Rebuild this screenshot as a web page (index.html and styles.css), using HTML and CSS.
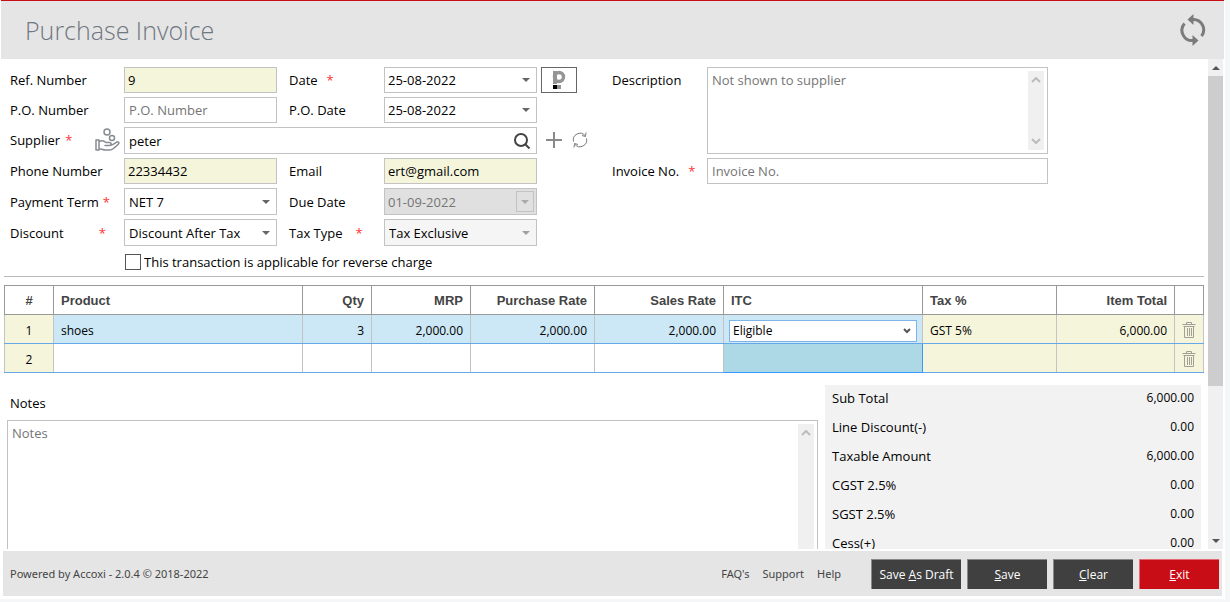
FILE: index.html
```html
<!DOCTYPE html>
<html lang="en">
<head>
    <meta charset="UTF-8">
    <meta name="viewport" content="width=device-width, initial-scale=1.0">
    <title>Purchase Invoice</title>
    <link rel="stylesheet" href="styles.css">
</head>
<body>
    <div class="app">
        <header class="page-header">
            <h1>Purchase Invoice</h1>
            <button type="button" class="icon-btn" aria-label="Refresh">
                <svg width="26" height="34" viewBox="0 0 26 34" fill="none" stroke="#7b7b7b" stroke-width="3">
                    <path d="M4.5 10.5A10.3 10.3 0 0 0 13.5 27.5"/>
                    <path d="M12.5 6.5A10.3 10.3 0 0 1 21.5 23"/>
                    <path d="M13.5 1V12L7.5 6.5Z" fill="#7b7b7b" stroke="none"/>
                    <path d="M12.5 22V33L18.5 27.5Z" fill="#7b7b7b" stroke="none"/>
                </svg>
            </button>
        </header>

        <div class="body">
            <main class="content">
                <form class="invoice-form">
                    <div class="fields">
                        <label class="c1" for="ref">Ref. Number</label>
                        <input class="c2 readonly" id="ref" type="text" value="9" readonly>
                        <label class="c3" for="date">Date <span class="req">*</span></label>
                        <input class="c4 drop" id="date" type="text" value="25-08-2022">
                        <button type="button" class="period-btn" aria-label="Period">
                            <svg width="14" height="20" viewBox="0 0 14 20">
                                <rect x="1" y="1" width="4" height="13" fill="#959595"/>
                                <circle cx="7" cy="7" r="4.5" fill="none" stroke="#959595" stroke-width="3.4"/>
                                <rect x="1" y="15" width="4" height="4" fill="#000"/>
                                <rect x="5" y="15" width="4" height="4" fill="#959595"/>
                            </svg>
                        </button>

                        <label class="c1" for="po">P.O. Number</label>
                        <input class="c2" id="po" type="text" placeholder="P.O. Number">
                        <label class="c3" for="podate">P.O. Date</label>
                        <input class="c4 drop" id="podate" type="text" value="25-08-2022">

                        <div class="c1 supplier-label">
                            <label for="supplier">Supplier <span class="req">*</span></label>
                            <svg width="25" height="24" viewBox="0 0 25 24" fill="none" stroke="#868b90" stroke-width="1.5" stroke-linejoin="round" stroke-linecap="round">
                                <circle cx="12" cy="4" r="3"/>
                                <circle cx="17" cy="10" r="2.5"/>
                                <path d="M1 12H4V22H1ZM4 13.5C7 12 9 12.5 11 14.5H14.5C17 14.5 16.5 17.5 14.5 17.5H10M16.5 17C19 16.5 20.5 14.5 22 14C24 13.5 24.5 15 23 16.5C20 19.5 17 22 15 22H10C8 22 7 20.5 4 21"/>
                            </svg>
                        </div>
                        <div class="search">
                            <input id="supplier" type="text" value="peter">
                            <button type="button" class="icon-btn" aria-label="Search supplier">
                                <svg width="18" height="18" viewBox="0 0 18 18" fill="none" stroke="#444" stroke-width="2">
                                    <circle cx="8" cy="8" r="6"/>
                                    <path d="M12 12L16.500 16.500"/>
                                </svg>
                            </button>
                        </div>
                        <div class="supplier-tools">
                            <button type="button" class="icon-btn" aria-label="Add supplier">
                                <svg width="16" height="16" viewBox="0 0 16 16" stroke="#8a8a8a" stroke-width="2"><path d="M8 0V16M0 8H16"/></svg>
                            </button>
                            <button type="button" class="icon-btn" aria-label="Reload suppliers">
                                <svg width="16" height="16" viewBox="0 0 16 16" fill="none" stroke="#7a7a7a">
                                    <path d="M1.5 9.5A6.7 6.7 0 0 1 13 3.5M14.5 6.5A6.7 6.7 0 0 1 3 12.5M14 0.5L13.5 4.5L10 3.5M2 15.5L2.5 11.5L6 12.5"/>
                                </svg>
                            </button>
                        </div>

                        <label class="c1" for="phone">Phone Number</label>
                        <input class="c2 readonly" id="phone" type="text" value="22334432" readonly>
                        <label class="c3" for="email">Email</label>
                        <input class="c4 readonly" id="email" type="text" value="ert@gmail.com" readonly>

                        <label class="c1 spread" for="term">Payment Term <span class="req">*</span></label>
                        <select class="c2 drop" id="term"><option>NET 7</option></select>
                        <label class="c3" for="due">Due Date</label>
                        <div class="due">
                            <input id="due" type="text" value="01-09-2022" disabled>
                            <span class="due-arrow"></span>
                        </div>

                        <label class="c1 spread" for="discount">Discount <span class="req">*</span></label>
                        <select class="c2 drop" id="discount"><option>Discount After Tax</option></select>
                        <label class="c3 tax-label" for="taxtype">Tax Type <span class="req">*</span></label>
                        <select class="c4 drop" id="taxtype" disabled><option>Tax Exclusive</option></select>

                        <label class="c6 desc-label" for="desc">Description</label>
                        <div class="text-wrap desc">
                            <textarea id="desc" placeholder="Not shown to supplier"></textarea>
                            <span class="mini-bar">
                                <svg width="10" height="6" viewBox="0 0 10 6"><path d="M1 5L5 1L9 5"/></svg>
                                <svg width="10" height="6" viewBox="0 0 10 6"><path d="M1 1L5 5L9 1"/></svg>
                            </span>
                        </div>
                        <label class="c6 invno-label" for="invno">Invoice No. <span class="req">*</span></label>
                        <input class="invno" id="invno" type="text" placeholder="Invoice No.">
                    </div>
                    <label class="reverse"><input type="checkbox"> This transaction is applicable for reverse charge</label>
                </form>

                <table class="items">
                    <colgroup>
                        <col class="w-num"><col><col class="w-qty"><col class="w-mrp"><col class="w-prate">
                        <col class="w-srate"><col class="w-itc"><col class="w-tax"><col class="w-total"><col class="w-del">
                    </colgroup>
                    <thead>
                        <tr>
                            <th class="mid">#</th>
                            <th>Product</th>
                            <th class="num">Qty</th>
                            <th class="num">MRP</th>
                            <th class="num">Purchase Rate</th>
                            <th class="num">Sales Rate</th>
                            <th>ITC</th>
                            <th>Tax %</th>
                            <th class="num">Item Total</th>
                            <th></th>
                        </tr>
                    </thead>
                    <tbody>
                        <tr class="active">
                            <td class="mid locked">1</td>
                            <td>shoes</td>
                            <td class="num">3</td>
                            <td class="num">2,000.00</td>
                            <td class="num">2,000.00</td>
                            <td class="num">2,000.00</td>
                            <td class="itc"><select aria-label="ITC"><option>Eligible</option></select></td>
                            <td class="locked">GST 5%</td>
                            <td class="num locked">6,000.00</td>
                            <td class="del locked">
                                <button type="button" class="icon-btn" aria-label="Delete row 1">
                                    <svg width="14" height="17" viewBox="0 0 14 17" fill="none" stroke="#a0a098"><path d="M0.5 3.5H13.5M4.5 3V1.5H9.5V3M1.5 5.5H12.5M2.5 5.5V16.5H11.5V5.5M5.5 7V15M7.5 7V15M9.5 7V15"/></svg>
                                </button>
                            </td>
                        </tr>
                        <tr>
                            <td class="mid locked">2</td>
                            <td></td>
                            <td></td>
                            <td></td>
                            <td></td>
                            <td></td>
                            <td class="focus"></td>
                            <td class="locked"></td>
                            <td class="locked"></td>
                            <td class="del locked">
                                <button type="button" class="icon-btn" aria-label="Delete row 2">
                                    <svg width="14" height="17" viewBox="0 0 14 17" fill="none" stroke="#a0a098"><path d="M0.5 3.5H13.5M4.5 3V1.5H9.5V3M1.5 5.5H12.5M2.5 5.5V16.5H11.5V5.5M5.5 7V15M7.5 7V15M9.5 7V15"/></svg>
                                </button>
                            </td>
                        </tr>
                    </tbody>
                </table>

                <div class="bottom">
                    <div class="notes">
                        <label for="notes">Notes</label>
                        <div class="text-wrap notes-box">
                            <textarea id="notes" placeholder="Notes"></textarea>
                            <span class="mini-bar">
                                <svg width="10" height="6" viewBox="0 0 10 6"><path d="M1 5L5 1L9 5"/></svg>
                                <svg width="10" height="6" viewBox="0 0 10 6"><path d="M1 1L5 5L9 1"/></svg>
                            </span>
                        </div>
                    </div>
                    <dl class="summary">
                        <div><dt>Sub Total</dt><dd>6,000.00</dd></div>
                        <div><dt>Line Discount(-)</dt><dd>0.00</dd></div>
                        <div><dt>Taxable Amount</dt><dd>6,000.00</dd></div>
                        <div><dt>CGST 2.5%</dt><dd>0.00</dd></div>
                        <div><dt>SGST 2.5%</dt><dd>0.00</dd></div>
                        <div><dt>Cess(+)</dt><dd>0.00</dd></div>
                    </dl>
                </div>
            </main>

            <div class="scrollbar">
                <span class="arrow"><svg width="8" height="4" viewBox="0 0 8 4"><path d="M0 4L4 0L8 4Z"/></svg></span>
                <div class="track"><div class="thumb"></div></div>
                <span class="arrow"><svg width="8" height="4" viewBox="0 0 8 4"><path d="M0 0L4 4L8 0Z"/></svg></span>
            </div>
        </div>

        <footer class="page-footer">
            <p>Powered by Accoxi - 2.0.4 © 2018-2022</p>
            <nav>
                <a href="#">FAQ's</a>
                <a href="#">Support</a>
                <a href="#">Help</a>
            </nav>
            <div class="actions">
                <button type="button" class="wide">Save <u>A</u>s Draft</button>
                <button type="button"><u>S</u>ave</button>
                <button type="button"><u>C</u>lear</button>
                <button type="button" class="exit"><u>E</u>xit</button>
            </div>
        </footer>
    </div>
</body>
</html>
```
FILE: styles.css
```css
* {
    margin: 0;
    padding: 0;
    box-sizing: border-box;
}

body {
    background: #f5f6f8;
    font-family: "Open Sans", "Noto Sans", sans-serif;
    font-size: 13px;
    color: #000;
}

input, select, textarea, button {
    font: inherit;
    color: inherit;
}

.app {
    display: flex;
    flex-direction: column;
    height: calc(100vh - 3px);
    margin-right: 5px;
    padding-bottom: 3px;
    background: #fff;
}

.icon-btn {
    display: flex;
    border: 0;
    background: none;
}

/* Header */
.page-header {
    display: flex;
    justify-content: space-between;
    align-items: center;
    height: 59px;
    margin: 0 1px;
    padding: 0 18px 0 24px;
    background: #e5e5e5;
    border-top: 1px solid #c90d17;
}

.page-header h1 {
    font-size: 25px;
    font-weight: 300;
    color: #6f7780;
}

/* Scrolling area */
.body {
    flex: 1;
    display: flex;
    min-height: 0;
    margin-bottom: 2px;
}

.content {
    flex: 1;
    min-width: 0;
    overflow: hidden;
    padding: 8px 4px 0;
}

.scrollbar {
    display: flex;
    flex-direction: column;
    width: 15px;
    margin-right: 2px;
    background: #f0f0f0;
}

.scrollbar .arrow {
    display: flex;
    align-items: center;
    justify-content: center;
    height: 17px;
    fill: #555;
}

.scrollbar .track {
    flex: 1;
}

.scrollbar .thumb {
    height: 68%;
    background: #cdcdcd;
}

/* Form fields */
.invoice-form {
    padding-bottom: 5px;
    border-bottom: 1px solid #b9b9b9;
}

.fields {
    display: grid;
    grid-template-columns: 114px 153px 12px 95px 153px 75px 95px minmax(200px, 341px);
    grid-template-rows: 26px 26px 27px 26px 27px 27px;
    row-gap: 4px;
    padding-left: 6px;
}

.fields label {
    display: flex;
    align-items: center;
    gap: 9px;
    white-space: nowrap;
}

.req {
    color: #f33;
    line-height: 10px;
}

.c1 { grid-column: 1; }
.c2 { grid-column: 2; }
.c3 { grid-column: 4; }
.c4 { grid-column: 5; }
.c6 { grid-column: 7; }

.fields .spread {
    justify-content: space-between;
    gap: 4px;
    padding-right: 18px;
}

.fields .tax-label {
    gap: 13px;
}

input[type="text"], select, textarea {
    width: 100%;
    min-width: 0;
    height: 100%;
    padding: 0 4px;
    border: 1px solid #c3c3c3;
    border-radius: 0;
    background-color: #fff;
    outline: none;
}

select {
    appearance: none;
}

::placeholder {
    color: #757575;
}

.fields .readonly {
    background-color: #f5f5dc;
    padding-left: 3px;
}

.drop {
    background-image: url("data:image/svg+xml,%3Csvg xmlns='http://www.w3.org/2000/svg' width='8' height='4'%3E%3Cpath d='M0 0L4 4L8 0Z' fill='%23666'/%3E%3C/svg%3E");
    background-repeat: no-repeat;
    background-position: right 6px center;
}

input[type="text"].drop {
    padding-left: 3px;
}

.drop:disabled {
    background-color: #f5f5f5;
    background-image: url("data:image/svg+xml,%3Csvg xmlns='http://www.w3.org/2000/svg' width='8' height='4'%3E%3Cpath d='M0 0L4 4L8 0Z' fill='%23a0a0a0'/%3E%3C/svg%3E");
    color: #000;
    opacity: 1;
}

.period-btn {
    grid-column: 6;
    display: flex;
    align-items: center;
    justify-content: center;
    width: 36px;
    margin-left: 4px;
    border: 1px solid #666;
    background: #fff;
}

.supplier-label {
    display: flex;
    align-items: center;
    justify-content: space-between;
    padding: 0 4px 2px 0;
}

.supplier-label label {
    gap: 5px;
}

.search {
    grid-column: 2 / 6;
    position: relative;
}

.search .icon-btn {
    position: absolute;
    top: 5px;
    right: 6px;
}

.supplier-tools {
    grid-column: 6;
    display: flex;
    align-items: center;
    gap: 10px;
    padding: 0 0 2px 9px;
}

.due {
    grid-column: 5;
    display: flex;
    border: 1px solid #c3c3c3;
    background: #e0e0e0;
    padding: 2px;
}

.due input[type="text"] {
    border: 0;
    padding: 0 1px;
    background: none;
    color: #757575;
}

.due-arrow {
    width: 18px;
    border: 1px solid #c3c3c3;
    flex-shrink: 0;
    background: url("data:image/svg+xml,%3Csvg xmlns='http://www.w3.org/2000/svg' width='8' height='4'%3E%3Cpath d='M0 0L4 4L8 0Z' fill='%23aaa'/%3E%3C/svg%3E") no-repeat center;
}

.desc-label {
    grid-row: 1;
}

.desc {
    grid-row: 1 / 4;
    grid-column: 8;
}

.invno-label {
    grid-row: 4;
}

.invno {
    grid-row: 4;
    grid-column: 8;
}

.text-wrap {
    position: relative;
}

textarea {
    display: block;
    padding: 3px 4px;
    line-height: 18px;
    resize: none;
    overflow: hidden;
}

.mini-bar {
    position: absolute;
    top: 4px;
    right: 4px;
    bottom: 4px;
    width: 16px;
    display: flex;
    flex-direction: column;
    justify-content: space-between;
    align-items: center;
    padding: 6px 0;
    background: #f0f0f0;
    fill: none;
    stroke: #bbb;
    stroke-width: 2;
}

.reverse {
    display: flex;
    align-items: center;
    gap: 3px;
    width: fit-content;
    height: 18px;
    margin: 7px 0 0 121px;
}

.reverse input {
    appearance: none;
    width: 16px;
    height: 16px;
    border: 1px solid #555;
    background: #fff;
}

/* Item grid */
.items {
    width: 100%;
    margin-top: 8px;
    border-collapse: collapse;
    table-layout: fixed;
}

.w-num { width: 49px; }
.w-qty { width: 69px; }
.w-mrp { width: 99px; }
.w-prate { width: 124px; }
.w-srate { width: 129px; }
.w-itc { width: 199px; }
.w-tax { width: 134px; }
.w-total { width: 118px; }
.w-del { width: 29px; }

.items th, .items td {
    height: 29px;
    padding: 3px 7px 0;
    text-align: left;
    font-size: 12px;
    line-height: 16px;
}

.items th {
    padding-top: 1px;
    border: 1px solid #999;
    font-family: "Liberation Sans", Arial, sans-serif;
    font-size: 13px;
    font-weight: bold;
    color: #444;
}

.items td {
    border: 1px solid #c3c3c3;
    border-bottom-color: #66a7e8;
}

.items .active td { background: #cce8f6; }
.items .locked, .items .active .locked { background: #f5f5dc; }
.items .num { text-align: right; }
.items .mid { text-align: center; }

.items .itc {
    padding: 3px 5px 0;
}

.items .itc select {
    display: block;
    height: 22px;
    padding: 0 3px;
    border-color: #7eb4ea;
    background: #fff url("data:image/svg+xml,%3Csvg xmlns='http://www.w3.org/2000/svg' width='8' height='6'%3E%3Cpath d='M1 1L4 4L7 1' fill='none' stroke='%23555' stroke-width='2'/%3E%3C/svg%3E") no-repeat right 5px center;
}

.items .focus {
    border: 1px solid #3399ff;
    background: #add8e6;
}

.items .del {
    padding: 0;
}

.del .icon-btn {
    margin: 0 auto;
}

/* Notes and totals */
.bottom {
    display: flex;
    gap: 7px;
    margin-top: 12px;
    padding: 0 3px;
}

.notes {
    flex: 1;
}

.notes label {
    display: block;
    height: 35px;
    padding: 9px 3px 0;
    line-height: 18px;
}

.notes-box {
    height: 180px;
}

.summary {
    width: 376px;
    padding-bottom: 40px;
    background: #f2f2f2;
}

.summary div {
    display: flex;
    justify-content: space-between;
    height: 29px;
    padding: 4px 7px 0;
    line-height: 18px;
}

.summary dd {
    font-size: 12px;
}

/* Footer */
.page-footer {
    display: flex;
    align-items: center;
    height: 45px;
    margin: 0 3px;
    padding: 0 3px 0 7px;
    background: #e5e5e5;
    font-family: "Noto Sans", "Open Sans", sans-serif;
    font-size: 11px;
    color: #444;
}

.page-footer p {
    flex: 1;
}

.page-footer nav {
    display: flex;
    gap: 13px;
    margin-right: 30px;
}

.page-footer a {
    color: #444;
    text-decoration: none;
}

.actions {
    display: flex;
    gap: 6px;
}

.actions button {
    width: 80px;
    height: 30px;
    border: 0;
    border-top: 1px solid #888;
    border-left: 1px solid #888;
    background: #404040;
    color: #fff;
    font-family: "Open Sans", "Noto Sans", sans-serif;
    font-size: 12px;
}

.actions .wide {
    width: 90px;
}

.actions .exit {
    border-color: #e06a70;
    background: #c90d17;
}
```
